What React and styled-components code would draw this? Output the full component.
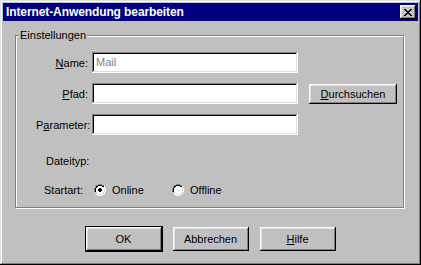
import React from 'react';
import styled, { createGlobalStyle } from 'styled-components';

const GlobalStyle = createGlobalStyle`
	html, body {
		margin: 0;
		padding: 0;
		background: #c0c0c0;
	}
	body {
		font-family: 'Liberation Sans', Arial, sans-serif;
		font-size: 11px;
		color: #000;
	}
`;

const Window = styled.div`
	width: 421px;
	height: 265px;
	box-sizing: border-box;
	padding: 3px;
	background: #c0c0c0;
	box-shadow:
		inset -1px -1px #000,
		inset 1px 1px #dfdfdf,
		inset -2px -2px #808080,
		inset 2px 2px #fff;
	display: flex;
	flex-direction: column;
`;

const TitleBar = styled.div`
	height: 18px;
	background: #000080;
	display: flex;
	align-items: center;
	justify-content: space-between;
	padding: 0 2px 0 3px;
`;

const Title = styled.span`
	color: #fff;
	font-weight: bold;
	font-size: 12px;
	letter-spacing: -0.1px;
`;

const CloseButton = styled.button`
	width: 16px;
	height: 14px;
	padding: 0;
	border: 0;
	background: #c0c0c0;
	display: flex;
	align-items: center;
	justify-content: center;
	box-shadow:
		inset -1px -1px #000,
		inset 1px 1px #fff,
		inset -2px -2px #808080,
		inset 2px 2px #dfdfdf;
`;

const Content = styled.div`
	padding: 14px 0 0 12px;
`;

const Group = styled.div`
	position: relative;
	width: 389px;
	height: 173px;
	box-sizing: border-box;
	border: 1px solid #808080;
	box-shadow:
		inset 1px 1px #fff,
		1px 1px #fff;
	padding: 16px 0 0 20px;
	display: flex;
	flex-direction: column;
	gap: 10px;
`;

const Legend = styled.span`
	position: absolute;
	top: -7px;
	left: 3px;
	padding: 0 1px;
	line-height: 13px;
	background: #c0c0c0;
`;

const Row = styled.div`
	display: flex;
	align-items: center;
	height: ${(p) => p.$h || 21}px;
	margin-top: ${(p) => p.$mt || 0}px;
`;

const Label = styled.label`
	width: ${(p) => p.$w || 52}px;
	padding-left: ${(p) => p.$pl || 0}px;
	box-sizing: border-box;
	text-align: ${(p) => p.$align || 'right'};
	margin-right: ${(p) => p.$mr ?? 4}px;
`;

const Field = styled.div`
	width: 206px;
	height: 21px;
	box-sizing: border-box;
	background: #fff;
	padding: 4px 4px;
	line-height: 13px;
	color: #808080;
	box-shadow:
		inset -1px -1px #fff,
		inset 1px 1px #808080,
		inset -2px -2px #dfdfdf,
		inset 2px 2px #000;
`;

const Button = styled.button`
	width: ${(p) => p.$w || 76}px;
	height: ${(p) => p.$h || 24}px;
	margin-left: ${(p) => p.$ml || 0}px;
	padding: 0;
	border: 0;
	background: #c0c0c0;
	font-family: 'Liberation Sans', Arial, sans-serif;
	font-size: 11px;
	color: #000;
	box-shadow:
		${(p) => (p.$default ? '0 0 0 1px #000,' : '')}
		inset -1px -1px #000,
		inset 1px 1px #fff,
		inset -2px -2px #808080,
		inset 2px 2px #dfdfdf;
`;

const RadioOption = styled.label`
	display: flex;
	align-items: center;
	width: ${(p) => p.$w || 78}px;
	gap: 6px;
`;

const Footer = styled.div`
	display: flex;
	justify-content: center;
	gap: 11px;
	padding: 19px 0 0 0;
`;

const Radio = ({ checked }) => (
	<svg width="12" height="12" viewBox="0 0 12 12" shapeRendering="crispEdges">
		<path d="M4 0h4v1H4zM2 1h2v1H2zM8 1h2v1H8zM1 2h1v2H1zM0 4h1v4H0zM1 8h1v1H1z" fill="#808080" />
		<path d="M4 1h4v1H4zM2 2h2v1H2zM8 2h2v1H8zM2 3h1v1H2zM1 4h1v4H1z" fill="#000" />
		<path d="M10 2h1v2h-1zM11 4h1v4h-1zM10 8h1v2h-1zM8 10h2v1H8zM4 11h4v1H4zM2 10h2v1H2z" fill="#fff" />
		<path d="M9 3h1v1H9zM10 4h1v4h-1zM9 8h1v1H9zM8 9h1v1H8zM4 10h4v1H4zM2 9h2v1H2zM1 8h1v1H1z" fill="#dfdfdf" />
		<path d="M4 2h4v1H4zM3 3h6v1H3zM2 4h8v4H2zM3 8h6v1H3zM4 9h4v1H4z" fill="#fff" />
		{checked && <path d="M5 4h2v1H5zM4 5h4v2H4zM5 7h2v1H5z" fill="#000" />}
	</svg>
);

export default function App() {
	return (
		<>
			<GlobalStyle />
			<Window>
				<TitleBar>
					<Title>Internet-Anwendung bearbeiten</Title>
					<CloseButton aria-label="Schließen">
						<svg width="8" height="7" viewBox="0 0 8 7" shapeRendering="crispEdges">
							<path
								d="M0 0h2v1h1v1h2V1h1V0h2v1H7v1H6v1H5v1h1v1h1v1h1v1H6V6H5V5H3v1H2v1H0V6h1V5h1V4h1V3H2V2H1V1H0z"
								fill="#000"
							/>
						</svg>
					</CloseButton>
				</TitleBar>
				<Content>
					<Group>
						<Legend>Einstellungen</Legend>
						<Row>
							<Label>
								<u>N</u>ame:
							</Label>
							<Field>Mail</Field>
						</Row>
						<Row>
							<Label>
								<u>P</u>fad:
							</Label>
							<Field />
							<Button $w={88} $h={20} $ml={11}>
								<u>D</u>urchsuchen
							</Button>
						</Row>
						<Row>
							<Label>
								P<u>a</u>rameter:
							</Label>
							<Field />
						</Row>
						<Row $mt={5}>
							<Label $align="left" $pl={10} $w={60}>
								Dateityp:
							</Label>
						</Row>
						<Row $mt={-2}>
							<Label $align="left" $pl={8} $w={58} $mr={0}>
								Startart:
							</Label>
							<RadioOption>
								<Radio checked />
								Online
							</RadioOption>
							<RadioOption>
								<Radio />
								Offline
							</RadioOption>
						</Row>
					</Group>
				</Content>
				<Footer>
					<Button $default>OK</Button>
					<Button>Abbrechen</Button>
					<Button>
						<u>H</u>ilfe
					</Button>
				</Footer>
			</Window>
		</>
	);
}
